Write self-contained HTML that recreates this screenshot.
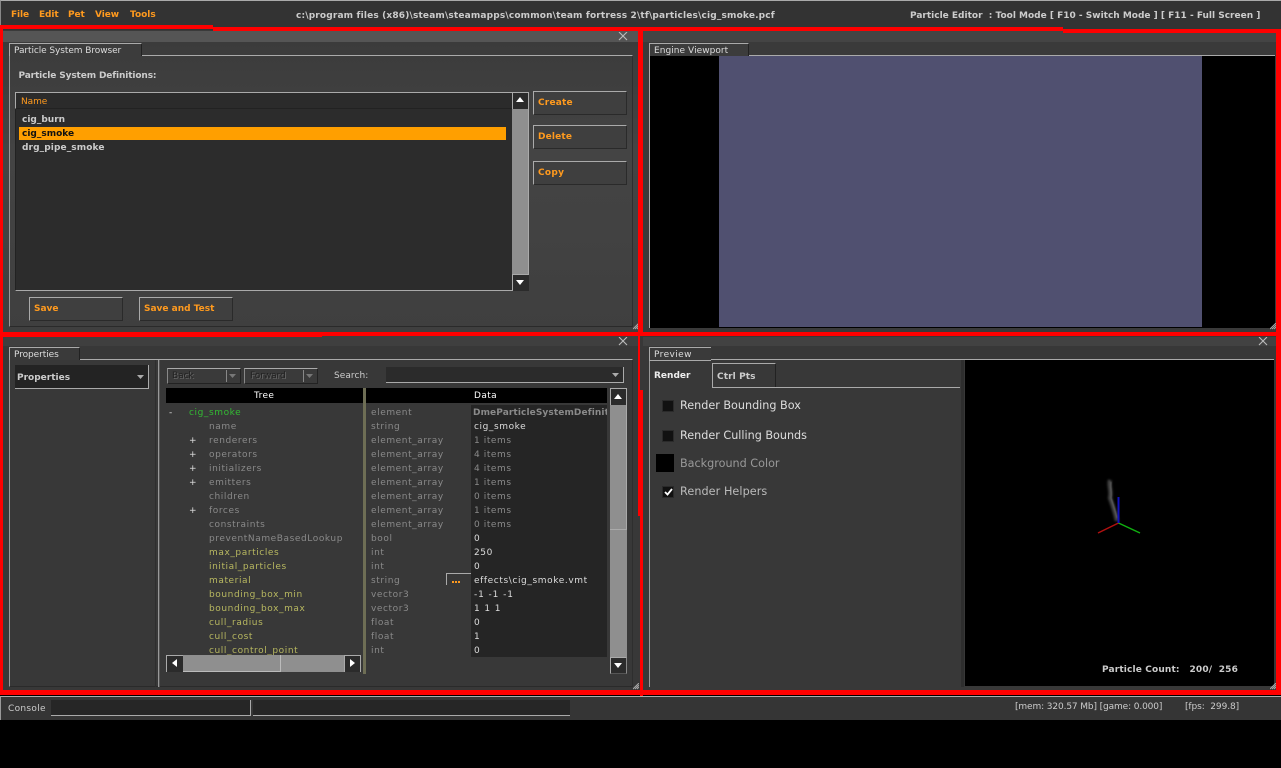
<!DOCTYPE html>
<html><head><meta charset="utf-8"><style>
html,body{margin:0;padding:0;background:#000;width:1281px;height:768px;overflow:hidden}
#r{position:relative;width:1281px;height:768px;overflow:hidden;font-family:"DejaVu Sans",sans-serif;font-size:9px;color:#ccc}
#r div{position:absolute;box-sizing:border-box}
.t{white-space:pre;line-height:14px;height:14px;margin-top:1px}
.b{font-weight:bold;font-size:9px;letter-spacing:0}
.n{font-size:9px;letter-spacing:-.08px}
.w{font-size:9px;letter-spacing:.58px}
.o{color:#ff9a1e}
.red{background:#f00}
.btn{background:#3f3f3f;border-top:1px solid #aaa;border-left:1px solid #aaa;border-right:1px solid #2a2a2a;border-bottom:1px solid #2a2a2a}
.pn{background:#383838}
.tb{background:#3a3a3a;border-top:1px solid #aaa;border-left:1px solid #aaa;border-right:1px solid #222}
.g{color:#8a8a8a}.y{color:#b8b860}.l{color:#ddd}
.sb{background:#2b2b2b;border-top:1px solid #aaa;border-left:1px solid #aaa}
.dis{color:#222;text-shadow:1px 1px 0 #666}
svg{position:absolute}
</style></head><body><div id="r">

<!-- top bar -->
<div style="left:0;top:0;width:1281px;height:30px;background:#333;border-top:1px solid #aaa;border-left:1px solid #888"></div>
<div class="t b o" style="left:11px;top:7px;letter-spacing:-.1px">File</div>
<div class="t b o" style="left:39px;top:7px;letter-spacing:-.1px">Edit</div>
<div class="t b o" style="left:68px;top:7px;letter-spacing:-.1px">Pet</div>
<div class="t b o" style="left:95px;top:7px;letter-spacing:-.1px">View</div>
<div class="t b o" style="left:130px;top:7px">Tools</div>
<div class="t b" style="left:296px;top:7.5px;letter-spacing:.16px">c:\program files (x86)\steam\steamapps\common\team fortress 2\tf\particles\cig_smoke.pcf</div>
<div class="t b" style="left:910px;top:7.5px">Particle Editor  : Tool Mode [ F10 - Switch Mode ] [ F11 - Full Screen ]</div>

<!-- panel 1 -->
<div class="pn" style="left:3px;top:30px;width:635px;height:302px;background:linear-gradient(#3a3a3a,#444 40%,#3f3f3f)"></div>
<div style="left:3px;top:31px;width:635px;height:11px;background:#555"></div>
<div style="left:9px;top:55px;width:624px;height:272px;border-top:1px solid #aaa;border-left:1px solid #999;border-right:1px solid #2e2e2e;border-bottom:1px solid #2a2a2a"></div>
<div class="tb" style="left:9px;top:43px;width:133px;height:13px;background:#3c3c3c"></div>
<div class="t n l" style="left:14px;top:43px">Particle System Browser</div>
<div class="t b" style="left:18.5px;top:68px;letter-spacing:-.13px">Particle System Definitions:</div>
<div style="left:15px;top:92px;width:514px;height:199px;background:#2c2c2c;border-bottom:1px solid #aaa;border-left:1px solid #222"></div>
<div style="left:15px;top:92px;width:497px;height:17px;background:#2b2b2b;border-top:1px solid #aaa;border-left:1px solid #aaa;border-bottom:1px solid #222"></div>
<div class="t n o" style="left:21px;top:93.5px">Name</div>
<div style="left:19px;top:127px;width:487px;height:13px;background:#ff9f00"></div>
<div class="t b" style="left:22px;top:112px">cig_burn</div>
<div class="t b" style="left:22px;top:126px;color:#111">cig_smoke</div>
<div class="t b" style="left:22px;top:140px;letter-spacing:.1px">drg_pipe_smoke</div>
<div style="left:512px;top:108px;width:16px;height:167px;background:#8f8f8f"></div>
<div class="sb" style="left:512px;top:92px;width:17px;height:17px"></div>
<div style="left:528px;top:92px;width:1px;height:199px;background:#aaa"></div>
<div class="sb" style="left:512px;top:274px;width:17px;height:17px"></div>
<svg style="left:516px;top:97px" width="9" height="6"><path d="M0 5H8L4 0Z" fill="#fff"/></svg>
<svg style="left:516px;top:280px" width="9" height="6"><path d="M0 0H8L4 5Z" fill="#fff"/></svg>
<div class="btn" style="left:533px;top:91px;width:94px;height:24px"></div>
<div class="t b o" style="left:538px;top:95px;letter-spacing:.2px">Create</div>
<div class="btn" style="left:533px;top:125px;width:94px;height:24px"></div>
<div class="t b o" style="left:538px;top:129px;letter-spacing:.15px">Delete</div>
<div class="btn" style="left:533px;top:161px;width:94px;height:24px"></div>
<div class="t b o" style="left:538px;top:165px;letter-spacing:.3px">Copy</div>
<div class="btn" style="left:29px;top:297px;width:94px;height:24px"></div>
<div class="t b o" style="left:34px;top:301px">Save</div>
<div class="btn" style="left:139px;top:297px;width:94px;height:24px"></div>
<div class="t b o" style="left:144px;top:301px">Save and Test</div>
<svg style="left:618px;top:32px" width="10" height="9"><path d="M1 0L9 8M9 0L1 8" stroke="#bbb" stroke-width="1.1"/></svg>

<!-- panel 2 -->
<div class="pn" style="left:642px;top:31px;width:634px;height:301px;background:#3a3a3a"></div>
<div style="left:642px;top:31px;width:634px;height:11px;background:#444"></div>
<div style="left:649px;top:55px;width:626px;height:273px;background:#000;border-top:1px solid #aaa;border-left:1px solid #aaa"></div>
<div style="left:719px;top:56px;width:483px;height:271px;background:#505070"></div>
<div class="tb" style="left:649px;top:43px;width:100px;height:13px;background:#3c3c3c"></div>
<div class="t n l" style="left:654px;top:43px;letter-spacing:.05px">Engine Viewport</div>

<!-- panel 3 -->
<div class="pn" style="left:3px;top:336px;width:637px;height:354px"></div>
<div style="left:3px;top:336px;width:635px;height:10px;background:#3f3f3f"></div>
<div style="left:9px;top:359px;width:624px;height:328px;border-top:1px solid #aaa;border-left:1px solid #999;border-bottom:1px solid #2a2a2a;border-right:1px solid #2e2e2e"></div>
<div class="tb" style="left:9px;top:347px;width:71px;height:13px"></div>
<div class="t n l" style="left:14px;top:347px">Properties</div>
<div style="left:158px;top:360px;width:2px;height:327px;background:#999;border-right:1px solid #555"></div>
<div style="left:155px;top:360px;width:1px;height:327px;background:#2e2e2e"></div>
<div style="left:15px;top:365px;width:134px;height:24px;background:#232323;border-right:1px solid #aaa;border-bottom:1px solid #aaa"></div>
<div class="t b" style="left:17px;top:370px">Properties</div>
<svg style="left:137px;top:375px" width="8" height="5"><path d="M0 0H7L3.5 4Z" fill="#aaa"/></svg>
<div style="left:167px;top:368px;width:74px;height:16px;background:#3a3a3a;border-top:1px solid #aaa;border-left:1px solid #888;border-right:1px solid #222;border-bottom:1px solid #222"></div>
<div class="t n dis" style="left:172px;top:368px">Back</div>
<div style="left:226px;top:370px;width:1px;height:12px;background:#888"></div>
<svg style="left:229px;top:374px" width="8" height="5"><path d="M0 0H7L3.5 4Z" fill="#777"/></svg>
<div style="left:244px;top:368px;width:74px;height:16px;background:#3a3a3a;border-top:1px solid #aaa;border-left:1px solid #888;border-right:1px solid #222;border-bottom:1px solid #222"></div>
<div class="t n dis" style="left:250px;top:368px">Forward</div>
<div style="left:303px;top:370px;width:1px;height:12px;background:#888"></div>
<svg style="left:306px;top:374px" width="8" height="5"><path d="M0 0H7L3.5 4Z" fill="#777"/></svg>
<div class="t n" style="left:334px;top:368px;letter-spacing:.05px">Search:</div>
<div style="left:386px;top:367px;width:238px;height:16px;background:#2b2b2b;border-right:1px solid #aaa;border-bottom:1px solid #aaa"></div>
<svg style="left:612px;top:373px" width="8" height="5"><path d="M0 0H7L3.5 4Z" fill="#aaa"/></svg>

<div style="left:166px;top:388px;width:441px;height:15px;background:#000"></div>
<div class="t n" style="left:254px;top:388px;color:#fff;letter-spacing:.4px">Tree</div>
<div class="t n" style="left:474px;top:388px;color:#fff;letter-spacing:.4px">Data</div>
<div style="left:363px;top:388px;width:3px;height:286px;background:#6e6e55"></div>
<div style="left:471px;top:405px;width:136px;height:252px;background:#252525"></div>

<div class="t w l" style="left:169px;top:405px">-</div>
<div class="t w" style="left:189px;top:405px;color:#33bb33">cig_smoke</div>
<div class="t w g" style="left:209px;top:419px">name</div>
<div class="t w l" style="left:189px;top:433px">+</div><div class="t w g" style="left:209px;top:433px">renderers</div>
<div class="t w l" style="left:189px;top:447px">+</div><div class="t w g" style="left:209px;top:447px">operators</div>
<div class="t w l" style="left:189px;top:461px">+</div><div class="t w g" style="left:209px;top:461px">initializers</div>
<div class="t w l" style="left:189px;top:475px">+</div><div class="t w g" style="left:209px;top:475px">emitters</div>
<div class="t w g" style="left:209px;top:489px">children</div>
<div class="t w l" style="left:189px;top:503px">+</div><div class="t w g" style="left:209px;top:503px">forces</div>
<div class="t w g" style="left:209px;top:517px">constraints</div>
<div class="t w g" style="left:209px;top:531px">preventNameBasedLookup</div>
<div class="t w y" style="left:209px;top:545px">max_particles</div>
<div class="t w y" style="left:209px;top:559px">initial_particles</div>
<div class="t w y" style="left:209px;top:573px">material</div>
<div class="t w y" style="left:209px;top:587px">bounding_box_min</div>
<div class="t w y" style="left:209px;top:601px">bounding_box_max</div>
<div class="t w y" style="left:209px;top:615px">cull_radius</div>
<div class="t w y" style="left:209px;top:629px">cull_cost</div>
<div class="t w y" style="left:209px;top:643px">cull_control_point</div>

<div class="t w g" style="left:371px;top:405px">element</div>
<div class="t w g" style="left:371px;top:419px">string</div>
<div class="t w g" style="left:371px;top:433px">element_array</div>
<div class="t w g" style="left:371px;top:447px">element_array</div>
<div class="t w g" style="left:371px;top:461px">element_array</div>
<div class="t w g" style="left:371px;top:475px">element_array</div>
<div class="t w g" style="left:371px;top:489px">element_array</div>
<div class="t w g" style="left:371px;top:503px">element_array</div>
<div class="t w g" style="left:371px;top:517px">element_array</div>
<div class="t w g" style="left:371px;top:531px">bool</div>
<div class="t w g" style="left:371px;top:545px">int</div>
<div class="t w g" style="left:371px;top:559px">int</div>
<div class="t w g" style="left:371px;top:573px">string</div>
<div class="t w g" style="left:371px;top:587px">vector3</div>
<div class="t w g" style="left:371px;top:601px">vector3</div>
<div class="t w g" style="left:371px;top:615px">float</div>
<div class="t w g" style="left:371px;top:629px">float</div>
<div class="t w g" style="left:371px;top:643px">int</div>

<div style="left:473px;top:405px;width:134px;height:15px;overflow:hidden"><div class="t b g" style="left:0;top:0;letter-spacing:.1px">DmeParticleSystemDefinition</div></div>
<div class="t w l" style="left:474px;top:419px">cig_smoke</div>
<div class="t w g" style="left:474px;top:433px">1 items</div>
<div class="t w g" style="left:474px;top:447px">4 items</div>
<div class="t w g" style="left:474px;top:461px">4 items</div>
<div class="t w g" style="left:474px;top:475px">1 items</div>
<div class="t w g" style="left:474px;top:489px">0 items</div>
<div class="t w g" style="left:474px;top:503px">1 items</div>
<div class="t w g" style="left:474px;top:517px">0 items</div>
<div class="t w l" style="left:474px;top:531px">0</div>
<div class="t w l" style="left:474px;top:545px">250</div>
<div class="t w l" style="left:474px;top:559px">0</div>
<div class="t w l" style="left:474px;top:573px;letter-spacing:.6px">effects\cig_smoke.vmt</div>
<div class="t w l" style="left:474px;top:587px;letter-spacing:.9px">-1 -1 -1</div>
<div class="t w l" style="left:474px;top:601px;letter-spacing:.9px">1 1 1</div>
<div class="t w l" style="left:474px;top:615px">0</div>
<div class="t w l" style="left:474px;top:629px">1</div>
<div class="t w l" style="left:474px;top:643px">0</div>

<div style="left:446px;top:573px;width:25px;height:12px;background:#383838;border-top:1px solid #aaa;border-left:1px solid #aaa"></div>
<div style="left:452px;top:581px;width:2px;height:2px;background:#ff9a1e"></div>
<div style="left:455px;top:581px;width:2px;height:2px;background:#ff9a1e"></div>
<div style="left:458px;top:581px;width:2px;height:2px;background:#ff9a1e"></div>

<div style="left:610px;top:404px;width:17px;height:254px;background:#8f8f8f"></div>
<div style="left:610px;top:404px;width:17px;height:126px;background:#8f8f8f;border-right:1px solid #aaa;border-bottom:1px solid #aaa"></div>
<div class="sb" style="left:610px;top:388px;width:17px;height:17px;background:#2b2b2b;border-right:1px solid #aaa"></div>
<div class="sb" style="left:610px;top:657px;width:17px;height:17px;background:#2b2b2b;border-right:1px solid #888;border-bottom:1px solid #555"></div>
<svg style="left:614px;top:394px" width="9" height="6"><path d="M0 5H8L4 0Z" fill="#fff"/></svg>
<svg style="left:614px;top:663px" width="9" height="6"><path d="M0 0H8L4 5Z" fill="#fff"/></svg>

<div style="left:166px;top:655px;width:195px;height:17px;background:#8f8f8f"></div>
<div style="left:183px;top:655px;width:98px;height:17px;background:#8f8f8f;border-right:1px solid #bbb;border-bottom:1px solid #bbb"></div>
<div class="sb" style="left:166px;top:655px;width:17px;height:17px;background:#2b2b2b"></div>
<div class="sb" style="left:344px;top:655px;width:17px;height:17px;background:#2b2b2b;border-right:1px solid #aaa"></div>
<svg style="left:172px;top:659px" width="6" height="9"><path d="M5 0V8L0 4Z" fill="#fff"/></svg>
<svg style="left:350px;top:659px" width="6" height="9"><path d="M0 0V8L5 4Z" fill="#fff"/></svg>
<svg style="left:618px;top:337px" width="10" height="9"><path d="M1 0L9 8M9 0L1 8" stroke="#bbb" stroke-width="1.1"/></svg>

<!-- panel 4 -->
<div class="pn" style="left:640px;top:336px;width:636px;height:354px"></div>
<div style="left:643px;top:337px;width:633px;height:9px;background:#424242"></div>
<div style="left:649px;top:359px;width:1px;height:328px;background:#999"></div>
<div style="left:649px;top:359px;width:625px;height:1px;background:#aaa"></div>
<div class="tb" style="left:649px;top:347px;width:62px;height:14px;border-right:none;border-bottom:1px solid #aaa"></div>
<div class="t n l" style="left:654px;top:347px;letter-spacing:.4px">Preview</div>
<div class="t b" style="left:654px;top:368px;color:#eee">Render</div>
<div style="left:712px;top:363px;width:64px;height:25px;border-top:1px solid #aaa;border-left:1px solid #aaa;border-right:1px solid #222"></div>
<div class="t b" style="left:717px;top:369px;letter-spacing:.1px">Ctrl Pts</div>
<div style="left:712px;top:387px;width:248px;height:1px;background:#aaa"></div>
<div style="left:961px;top:360px;width:3px;height:327px;background:#2e2e2e"></div>
<div style="left:965px;top:360px;width:309px;height:326px;background:#000"></div>
<div style="left:662px;top:400px;width:12px;height:12px;background:#111;border:1px solid #2a2a2a"></div>
<div class="t" style="left:680px;top:398px;font-size:11.2px;color:#ddd">Render Bounding Box</div>
<div style="left:662px;top:430px;width:12px;height:12px;background:#111;border:1px solid #2a2a2a"></div>
<div class="t" style="left:680px;top:428px;font-size:11.2px;color:#ddd">Render Culling Bounds</div>
<div style="left:656px;top:454px;width:18px;height:18px;background:#000"></div>
<div class="t" style="left:680px;top:456px;font-size:11.2px;color:#999">Background Color</div>
<div style="left:662px;top:486px;width:12px;height:12px;background:#111;border:1px solid #2a2a2a"></div>
<svg style="left:664px;top:488px" width="9" height="8"><path d="M1 4L3.5 6.5L8 1" fill="none" stroke="#fff" stroke-width="1.8"/></svg>
<div class="t" style="left:680px;top:484px;font-size:11.2px;color:#bbb;letter-spacing:.08px">Render Helpers</div>
<svg style="left:1095px;top:474px" width="50" height="65">
<path d="M15 6C13 12 17 16 15 24C18 32 20 38 22 47" stroke="#444" stroke-width="4" fill="none" style="filter:blur(1px)"/>
<path d="M16 8C15 14 17 17 16 24C18 30 20 36 22 44" stroke="#666" stroke-width="1" fill="none" style="filter:blur(.6px)"/>
<path d="M23.5 49L3 59" stroke="#b01010" stroke-width="1.5"/>
<path d="M23.5 49L45 59" stroke="#10b010" stroke-width="1.5"/>
<path d="M23.5 49V23" stroke="#1010c0" stroke-width="2"/>
</svg>
<div class="t b" style="left:1102px;top:662px;letter-spacing:.15px">Particle Count:   200/  256</div>
<svg style="left:1258px;top:337px" width="10" height="9"><path d="M1 0L9 8M9 0L1 8" stroke="#bbb" stroke-width="1.1"/></svg>

<!-- grips -->
<svg style="left:633px;top:323px" width="6" height="7"><path d="M0 6L6 0M2 6L6 2M4 6L6 4" stroke="#aaa"/></svg>
<svg style="left:1270px;top:323px" width="6" height="7"><path d="M0 6L6 0M2 6L6 2M4 6L6 4" stroke="#aaa"/></svg>
<svg style="left:633px;top:683px" width="6" height="7"><path d="M0 6L6 0M2 6L6 2M4 6L6 4" stroke="#aaa"/></svg>
<svg style="left:1270px;top:683px" width="6" height="7"><path d="M0 6L6 0M2 6L6 2M4 6L6 4" stroke="#aaa"/></svg>

<!-- red lines -->
<div class="red" style="left:0;top:25px;width:213px;height:4px"></div>
<div class="red" style="left:213px;top:27px;width:429px;height:4px"></div>
<div class="red" style="left:642px;top:27px;width:421px;height:4px"></div>
<div class="red" style="left:1063px;top:29px;width:218px;height:4px"></div>
<div class="red" style="left:0;top:25px;width:3px;height:670px"></div>
<div class="red" style="left:638px;top:27px;width:5px;height:309px"></div>
<div class="red" style="left:1276px;top:29px;width:5px;height:666px"></div>
<div class="red" style="left:0;top:332px;width:322px;height:5px"></div>
<div class="red" style="left:322px;top:332px;width:959px;height:4px"></div>
<div class="red" style="left:638px;top:336px;width:2px;height:180px"></div>
<div class="red" style="left:640px;top:390px;width:3px;height:306px"></div>
<div class="red" style="left:0;top:690px;width:1281px;height:5px"></div>

<!-- status -->
<div style="left:0;top:696px;width:1281px;height:24px;background:#353535;border-top:1px solid #aaa;border-left:1px solid #999"></div>
<div class="t n" style="left:8px;top:701px;letter-spacing:.3px">Console</div>
<div style="left:51px;top:700px;width:200px;height:16px;background:#262626;border-right:1px solid #aaa;border-bottom:1px solid #aaa"></div>
<div style="left:253px;top:700px;width:317px;height:16px;background:#262626;border-bottom:1px solid #aaa"></div>
<div class="t n" style="left:1015px;top:699px;letter-spacing:-.12px">[mem: 320.57 Mb] [game: 0.000]</div>
<div class="t n" style="left:1185px;top:699px">[fps:  299.8]</div>
</div></body></html>
